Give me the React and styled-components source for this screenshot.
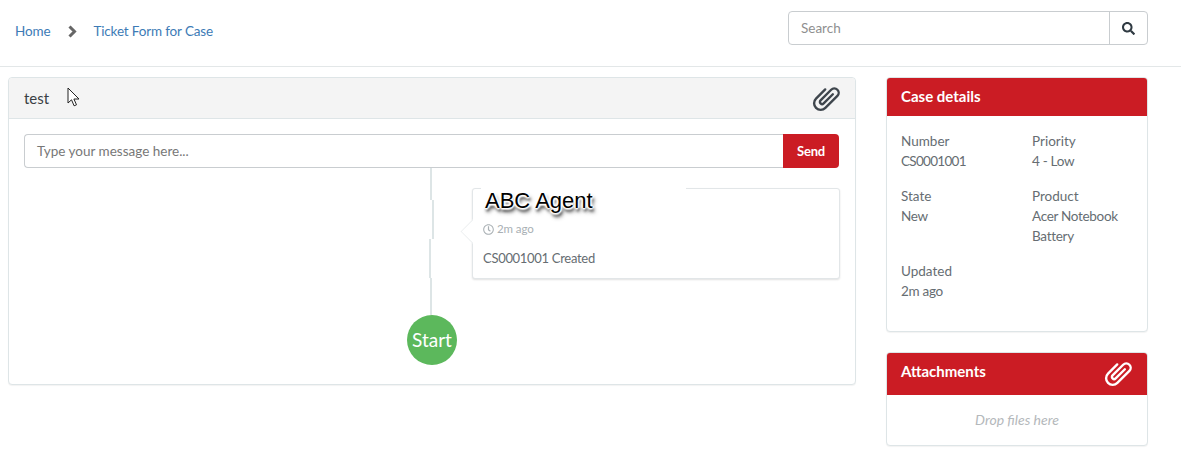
import React from "react";
import styled, { createGlobalStyle } from "styled-components";
import { FaSearch, FaRegClock } from "react-icons/fa";

const Global = createGlobalStyle`
  html, body { margin: 0; padding: 0; background: #fff; }
  body { font-family: "Lato", "Noto Sans", sans-serif; font-size: 14px; color: #58666e; }
  * { box-sizing: border-box; }
`;

const Page = styled.div`
  width: 1181px;
  height: 468px;
  overflow: hidden;
`;
const TopBar = styled.header`
  height: 67px;
  border-bottom: 1px solid #e3e7e8;
  display: flex;
  align-items: flex-start;
  justify-content: space-between;
  padding: 11px 33px 0 15px;
`;
const Crumbs = styled.nav`
  display: flex;
  align-items: center;
  height: 40px;
  font-size: 13.5px;
  letter-spacing: -0.15px;
  color: #3d7bb6;
`;
const Sep = styled.svg`
  width: 11px;
  height: 13px;
  margin: 0 15px 0 17px;
`;
const SearchBox = styled.div`
  width: 360px;
  height: 34px;
  display: flex;
  border: 1px solid #c9cdd0;
  border-radius: 4px;
`;
const SearchField = styled.div`
  flex: 1;
  padding: 0 12px;
  line-height: 32px;
  color: #8f8f8f;
  font-size: 13.5px;
`;
const SearchBtn = styled.div`
  width: 38px;
  border-left: 1px solid #c9cdd0;
  display: flex;
  align-items: center;
  justify-content: center;
  color: #2f3a42;
  font-size: 13px;
`;
const Content = styled.main`
  display: flex;
  align-items: flex-start;
  padding: 10px 33px 0 8px;
  gap: 30px;
`;
const Panel = styled.section`
  background: #fff;
  border: 1px solid #dee5e7;
  border-radius: 4px;
  box-shadow: 0 1px 1px rgba(0, 0, 0, 0.05);
`;
const MainPanel = styled(Panel)`
  width: 848px;
`;
const MainHead = styled.div`
  height: 41px;
  background: #f4f4f4;
  border-bottom: 1px solid #dee5e7;
  border-radius: 4px 4px 0 0;
  display: flex;
  align-items: center;
  justify-content: space-between;
  padding: 0 15px 1px;
  font-size: 15px;
  color: #3a3f44;
  position: relative;
`;
const Cursor = styled.svg`
  position: absolute;
  left: 58px;
  top: 9px;
  width: 14px;
  height: 21px;
`;
const ClipIcon = styled.svg`
  width: 32px;
  height: 32px;
  margin-right: -2px;
  flex: none;
`;
const MainBody = styled.div`
  padding: 15px 16px 19px 15px;
`;
const SendRow = styled.div`
  display: flex;
  height: 34px;
`;
const MsgInput = styled.div`
  flex: 1;
  border: 1px solid #c9cdd0;
  border-right: 0;
  border-radius: 4px 0 0 4px;
  padding: 0 12px;
  line-height: 32px;
  color: #777;
  font-size: 13.5px;
`;
const SendBtn = styled.div`
  width: 56px;
  background: #cb1c24;
  color: #fff;
  font-weight: 700;
  font-size: 13px;
  letter-spacing: -0.2px;
  line-height: 34px;
  text-align: center;
  border-radius: 0 4px 4px 0;
`;
const TimelineRow = styled.div`
  display: grid;
  grid-template-columns: 406px 2px 40px 368px;
`;
const Rail = styled.div`
  grid-column: 2;
  display: flex;
  flex-direction: column;
  align-items: flex-start;
`;
const RailPiece = styled.div`
  width: 2px;
  height: ${(p) => p.$h}px;
  flex: ${(p) => (p.$grow ? 1 : "none")};
  margin-left: ${(p) => p.$shift || 0}px;
  background: #dde5e6;
`;
const Bubble = styled.article`
  grid-column: 4;
  margin: 20px 0 36px;
  height: 91px;
  border: 1px solid #e2e6e8;
  border-radius: 3px;
  box-shadow: 0 1px 2px rgba(0, 0, 0, 0.12);
  padding: 0 10px;
  position: relative;
  background: #fff;
  &::before {
    content: "";
    position: absolute;
    left: -11px;
    top: 32px;
    width: 20px;
    height: 20px;
    background: #fff;
    border-left: 1px solid #eceff0;
    border-bottom: 1px solid #eceff0;
    transform: rotate(45deg) scale(0.8);
  }
`;
const TopMask = styled.div`
  position: absolute;
  left: 8px;
  top: -2px;
  width: 205px;
  height: 3px;
  background: #fff;
`;
const Agent = styled.div`
  position: relative;
  margin: -2px 0 0 2px;
  height: 30px;
  font-family: "Liberation Sans", Arial, sans-serif;
  font-size: 22px;
  line-height: 28px;
  color: #000;
  text-shadow: 1px 0 1px #fff, -1px 0 1px #fff, 0 1px 1px #fff, 0 -1px 1px #fff, 2px 0 2px #fff, -2px 0 2px #fff, 0 2px 2px #fff, 0 -2px 2px #fff,
    1px 3px 3px rgba(0, 0, 0, 0.9), 2px 4px 4px rgba(0, 0, 0, 0.7);
`;
const Ago = styled.div`
  position: relative;
  margin-top: 4px;
  display: flex;
  align-items: center;
  gap: 3px;
  font-size: 11.5px;
  letter-spacing: -0.1px;
  color: #a9b0b4;
  line-height: 16px;
`;
const BubbleText = styled.div`
  position: relative;
  margin-top: 13px;
  font-size: 13px;
  letter-spacing: -0.3px;
  color: #666d72;
`;
const StartRow = styled.div`
  display: flex;
  padding-left: 383px;
`;
const StartDot = styled.div`
  width: 50px;
  height: 50px;
  padding-bottom: 2px;
  border-radius: 50%;
  background: #5cb85c;
  color: #fff;
  display: flex;
  align-items: center;
  justify-content: center;
  font-size: 19px;
`;
const Side = styled.aside`
  width: 262px;
  display: flex;
  flex-direction: column;
  gap: 20px;
`;
const SideHead = styled.div`
  background: #cb1c24;
  color: #fff;
  height: ${(p) => p.$h}px;
  border-radius: 3px 3px 0 0;
  padding: 0 15px 2px 14px;
  display: flex;
  align-items: center;
  justify-content: space-between;
  font-size: 15px;
  font-weight: 700;
`;
const AttachHead = styled(SideHead)`
  padding-bottom: 7px;
`;
const AttachClip = styled.span`
  display: flex;
  margin-top: 5px;
`;
const Details = styled.div`
  display: grid;
  grid-template-columns: 131px 1fr;
  padding: 15px 14px 30px;
  row-gap: 15px;
  font-size: 13.5px;
  line-height: 20px;
  color: #666d72;
`;
const Value = styled.div`
  letter-spacing: ${(p) => (p.$code ? "-0.7px" : "-0.3px")};
`;
const Drop = styled.div`
  height: 50px;
  padding-bottom: 2px;
  display: flex;
  align-items: center;
  justify-content: center;
  font-style: italic;
  font-size: 14px;
  color: #b4b8bb;
`;

const Clip = ({ color }) => (
  <ClipIcon viewBox="-16 -16 32 32" fill="none" stroke={color} strokeWidth="2.4" strokeLinecap="round" strokeLinejoin="round" aria-hidden="true">
    <g transform="rotate(45) translate(0 -1.5)">
      <path d="M2.2 -6V7A2.2 2.2 0 0 1 -2.2 7V-8A4.4 4.4 0 0 1 6.6 -8V9A6.6 6.6 0 0 1 -6.6 9V-4" />
    </g>
  </ClipIcon>
);

const Field = ({ label, lines, code }) => (
  <div>
    <div>{label}</div>
    {lines.map((l) => (
      <Value key={l} $code={code}>
        {l}
      </Value>
    ))}
  </div>
);

export default function App() {
  return (
    <Page>
      <Global />
      <TopBar>
        <Crumbs>
          <span>Home</span>
          <Sep viewBox="0 0 11 13" aria-hidden="true">
            <path d="M2.5 1.5 7.5 6.5 2.5 11.5" fill="none" stroke="#666" strokeWidth="3" />
          </Sep>
          <span>Ticket Form for Case</span>
        </Crumbs>
        <SearchBox>
          <SearchField>Search</SearchField>
          <SearchBtn>
            <FaSearch />
          </SearchBtn>
        </SearchBox>
      </TopBar>
      <Content>
        <MainPanel>
          <MainHead>
            <span>test</span>
            <Cursor viewBox="0 0 14 21" aria-hidden="true">
              <path d="M1 1v15l3.5-3.2 2.6 6 2.4-1-2.6-5.8H12z" fill="#fff" stroke="#222" strokeWidth="1" />
            </Cursor>
            <Clip color="#3f464d" />
          </MainHead>
          <MainBody>
            <SendRow>
              <MsgInput>Type your message here...</MsgInput>
              <SendBtn>Send</SendBtn>
            </SendRow>
            <TimelineRow>
              <Rail>
                <RailPiece $h={32} />
                <RailPiece $h={39} $shift={2} />
                <RailPiece $h={39} $shift={-1} />
                <RailPiece $grow />
              </Rail>
              <Bubble>
                <TopMask />
                <Agent>ABC Agent</Agent>
                <Ago>
                  <FaRegClock size={11} />
                  2m ago
                </Ago>
                <BubbleText>CS0001001 Created</BubbleText>
              </Bubble>
            </TimelineRow>
            <StartRow>
              <StartDot>Start</StartDot>
            </StartRow>
          </MainBody>
        </MainPanel>
        <Side>
          <Panel>
            <SideHead $h={38}>Case details</SideHead>
            <Details>
              <Field label="Number" lines={["CS0001001"]} code />
              <Field label="Priority" lines={["4 - Low"]} />
              <Field label="State" lines={["New"]} />
              <Field label="Product" lines={["Acer Notebook", "Battery"]} />
              <Field label="Updated" lines={["2m ago"]} />
            </Details>
          </Panel>
          <Panel>
            <AttachHead $h={42}>
              Attachments
              <AttachClip>
                <Clip color="#fff" />
              </AttachClip>
            </AttachHead>
            <Drop>Drop files here</Drop>
          </Panel>
        </Side>
      </Content>
    </Page>
  );
}
